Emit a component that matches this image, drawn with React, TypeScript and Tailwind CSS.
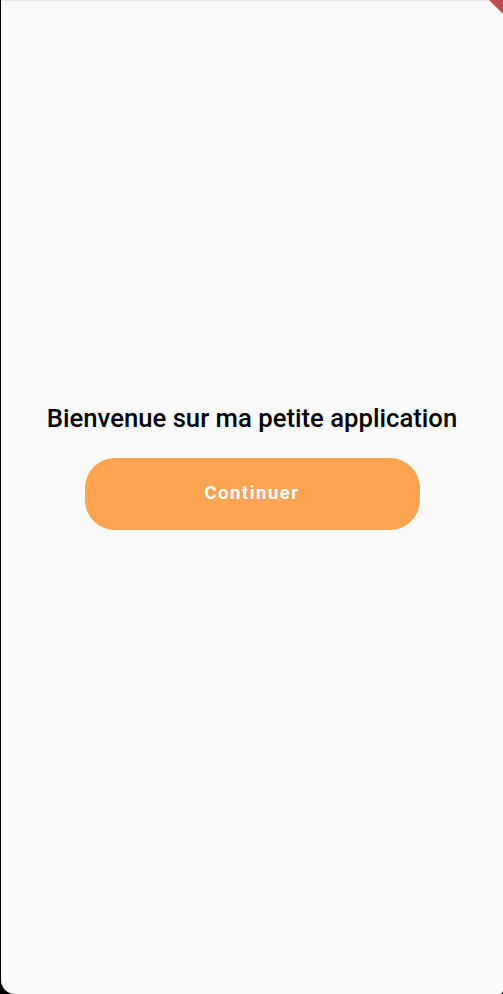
import React from 'react';

export default function App() {
  return (
    <div className="relative w-[503px] h-[994px] bg-black overflow-hidden" style={{ fontFamily: 'Roboto, "Liberation Sans", sans-serif' }}>
      {/* Screen */}
      <div className="ml-[1px] h-full bg-[#fafafa] border-t border-[#e6e6e6] rounded-bl-[14px] rounded-br-[4px] flex flex-col items-center pt-[402px]">
        <h1 className="text-[25.7px] leading-[30px] font-medium text-black">
          Bienvenue sur ma petite application
        </h1>
        <button className="mt-[25px] w-[335px] h-[72px] rounded-[30px] bg-[#ffa552] text-white text-[18.5px] font-bold tracking-[1.5px]">
          Continuer
        </button>
      </div>

      {/* Debug banner corner */}
      <div className="absolute -top-[1px] -right-[1px] w-0 h-0 border-t-[16px] border-l-[16px] border-t-[#c0504d] border-l-transparent" />
    </div>
  );
}
